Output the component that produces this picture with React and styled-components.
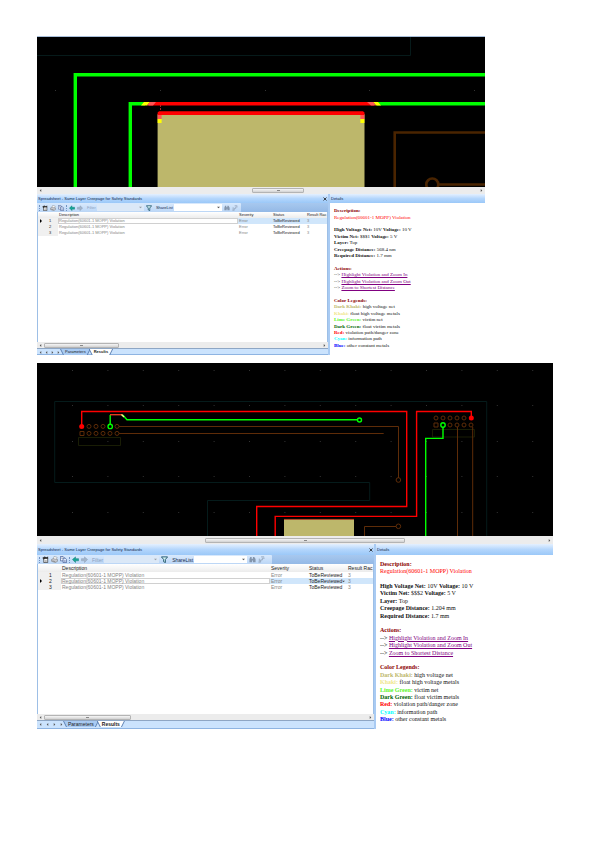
import React from "react";
import styled, { createGlobalStyle, ThemeProvider, css } from "styled-components";

const GlobalStyle = createGlobalStyle`
  * {
    box-sizing: border-box;
  }
  body {
    margin: 0;
    background: #fff;
    font-family: "Liberation Sans", Arial, sans-serif;
  }
`;

const compact = {
  uiText: "4px",
  titleText: "4px",
  docText: "5px",
  scroll: "7px",
  title: "9px",
  header: "6px",
  icon: "6px",
  iconGap: "2px",
  inset: "68px",
  panes: "161px",
  details: "155px",
  rowHead: "20px",
  severity: "34px",
  status: "34px",
  result: "21px",
  filter: "47px",
  share: "48px",
  toolbar: "204px",
  tabs: "7px",
  tabGap: "3px",
};

const regular = {
  uiText: "5px",
  titleText: "4px",
  docText: "6px",
  scroll: "8px",
  title: "11px",
  header: "8px",
  icon: "7px",
  iconGap: "2px",
  inset: "0px",
  panes: "185px",
  details: "177px",
  rowHead: "23px",
  severity: "38px",
  status: "39px",
  result: "26px",
  filter: "55px",
  share: "53px",
  toolbar: "235px",
  tabs: "9px",
  tabGap: "4px",
};

const Page = styled.main`
  display: flex;
  flex-direction: column;
  gap: 8px;
  padding: 36px 47px 40px 37px;
`;

const Window = styled.section`
  width: calc(100% - ${({ theme }) => theme.inset});
  font-size: ${({ theme }) => theme.uiText};
  line-height: 6px;
  color: #222;
`;

const Board = styled.svg`
  display: block;
  width: 100%;
  height: auto;
  background: #000;
`;

const BoardFrame = styled.div`
  border-top: ${({ $line }) => ($line ? "1px solid #a9bfda" : "0")};
`;

const ScrollBar = styled.div`
  display: flex;
  align-items: center;
  gap: 2px;
  height: ${({ $thin, theme }) => ($thin ? "6px" : theme.scroll)};
  padding: 0 2px;
  background: #ececec;
`;

const Track = styled.div`
  flex: 1;
  height: 5px;
`;

const Thumb = styled.div`
  display: flex;
  align-items: center;
  justify-content: center;
  width: ${({ $size }) => $size}%;
  height: 5px;
  margin-left: ${({ $start }) => $start}%;
  border: 1px solid #b4b4b4;
  border-radius: 1px;
  background: linear-gradient(#f6f6f6, #d2d2d2);
  &::after {
    content: "";
    width: 3px;
    height: 1px;
    background: #888;
  }
`;

const Arrow = styled.svg`
  display: block;
  flex: none;
  width: ${({ $large }) => ($large ? "4px" : "3px")};
  height: ${({ $large }) => ($large ? "4px" : "3px")};
  fill: #555;
`;

const Panes = styled.div`
  display: grid;
  grid-template-columns: minmax(0, 1fr) ${({ theme }) => theme.details};
  gap: 2px;
  min-height: ${({ theme }) => theme.panes};
  background: #a9cbf3;
`;

const Pane = styled.div`
  display: flex;
  flex-direction: column;
  min-width: 0;
`;

const TitleBar = styled.header`
  display: flex;
  align-items: center;
  justify-content: space-between;
  height: ${({ theme }) => theme.title};
  padding: 0 1px;
  font-size: ${({ theme }) => theme.titleText};
  color: #10284c;
  background: linear-gradient(#e4f0ff, #b4d6fc 50%, #9bc8f8);
  white-space: nowrap;
`;

const Heading = styled.h2`
  margin: 0;
  font-size: inherit;
  font-weight: 400;
`;

const IconButton = styled.button`
  display: flex;
  flex: none;
  width: ${({ theme, $size }) => $size || theme.icon};
  padding: 0;
  border: 0;
  background: none;
  & svg {
    display: block;
    width: 100%;
  }
`;

const ToolStrip = styled.div`
  height: 9px;
  background: linear-gradient(#a7c8ef, #94b9e6);
`;

const ToolBar = styled.div`
  display: flex;
  align-items: center;
  gap: ${({ theme }) => theme.iconGap};
  width: ${({ theme }) => theme.toolbar};
  height: 9px;
  padding-left: 2px;
  border-radius: 0 1px 1px 0;
  background: linear-gradient(#d9e9fc, #bbd6f6);
  white-space: nowrap;
`;

const Grip = styled.span`
  height: 6px;
  border-left: 1px dotted #6f93c3;
`;

const Field = styled.label`
  display: flex;
  align-items: center;
  gap: 1px;
  margin-left: 2px;
  color: ${({ $muted }) => ($muted ? "#8aa0bf" : "#15294b")};
`;

const SelectBox = styled.span`
  display: flex;
  align-items: center;
  width: ${({ $width }) => $width};
  height: 7px;
  padding-right: 2px;
  background: ${({ $muted }) => ($muted ? "#dbe8f7" : "#fff")};
  & select {
    flex: 1;
    min-width: 0;
    height: 6px;
    padding: 0;
    border: 0;
    background: transparent;
    appearance: none;
    font-size: 4px;
  }
`;

const TableArea = styled.div`
  flex: 1;
  border-left: 1px solid #9dbfe6;
  border-right: 1px solid #9dbfe6;
  background: #fff;
`;

const Table = styled.table`
  width: 100%;
  table-layout: fixed;
  border-collapse: separate;
  border-spacing: 0;
  white-space: nowrap;
  & th,
  & td {
    height: 6px;
    padding: 0 0 0 1px;
    overflow: hidden;
    text-align: left;
    font-weight: 400;
    line-height: 6px;
  }
  & thead th {
    height: ${({ theme }) => theme.header};
    line-height: ${({ theme }) => theme.header};
    background: linear-gradient(#fff, #ececec);
  }
`;

const Column = styled.col`
  width: ${({ theme, $name }) => theme[$name]};
`;

const RowHead = styled.th`
  background: #f0f0f0;
  & div {
    display: flex;
    align-items: center;
    gap: 6px;
  }
`;

const Cell = styled.td`
  color: ${({ $strong }) => ($strong ? "#222" : "#858585")};
  ${({ $active }) =>
    $active &&
    css`
      background: #d0e6fb;
    `}
`;

const DescriptionCell = styled(Cell)`
  background: #fff;
  box-shadow: inset 0 0 0 1px ${({ $active }) => ($active ? "#d0d0d0" : "#fff")};
`;

const StatusText = styled.div`
  display: flex;
  align-items: center;
`;

const TabStrip = styled.nav`
  display: flex;
  align-items: flex-start;
  height: ${({ theme }) => theme.tabs};
  padding-left: 2px;
  border-top: 1px solid #8ea6c4;
  border-bottom: 1px solid #8eb4e2;
  background: #cbe3fd;
`;

const TabArrows = styled.div`
  display: flex;
  align-items: center;
  gap: ${({ theme }) => theme.tabGap};
  height: 6px;
`;

const Tab = styled.button`
  position: relative;
  isolation: isolate;
  height: 6px;
  margin-right: -2px;
  padding: 0 5px;
  border: 0;
  background: #5f83b4;
  clip-path: polygon(0 0, 100% 0, calc(100% - 3px) 100%, 3px 100%);
  color: #222;
  font-family: inherit;
  font-size: ${({ theme }) => theme.uiText};
  font-weight: ${({ $active }) => ($active ? 700 : 400)};
  line-height: 6px;
  &::before {
    content: "";
    position: absolute;
    inset: 0 1px;
    z-index: -1;
    background: ${({ $active }) => ($active ? "#fff" : "#a9cbf3")};
    clip-path: polygon(0 0, 100% 0, calc(100% - 3px) 100%, 3px 100%);
  }
`;

const Report = styled.div`
  flex: 1;
  display: grid;
  grid-auto-rows: 1fr;
  padding: 5px 0 6px 4px;
  background: #fff;
  color: #111;
  font-family: "Liberation Serif", "Times New Roman", serif;
  font-size: ${({ theme }) => theme.docText};
  line-height: 6px;
  white-space: nowrap;
`;

const Line = styled.div`
  display: flex;
  align-items: center;
  min-height: 0;
  color: ${({ $color }) => $color || "inherit"};
  & p {
    margin: 0;
  }
  & a {
    color: #800080;
  }
`;

const Label = styled.b`
  color: ${({ $color }) => $color || "inherit"};
`;

const LeftArrow = () => (
  <Arrow viewBox="0 0 4 4"><path d="M3 0v4L1 2z" /></Arrow>
);

const RightArrow = () => (
  <Arrow viewBox="0 0 4 4"><path d="M1 0v4l2-2z" /></Arrow>
);

const DownArrow = ({ muted }) => (
  <Arrow viewBox="0 0 4 4"><path d="M0 1h4L2 3z" opacity={muted ? 0.5 : 1} /></Arrow>
);

const icons = {
  Properties: (
    <>
      <path d="M4 5h9v10H4z" fill="#fff" stroke="#222" strokeWidth="1.5" />
      <path d="M1 4l5-3 4 2 4-2v5H7L3 8z" fill="#333" />
      <path d="M6 10h5M6 12.500h5" stroke="#555" />
    </>
  ),
  Print: (
    <>
      <path d="M5 7l2-6 7 2-2 5" fill="#fff" stroke="#777" />
      <path d="M1 8l4-2 10 2v4l-5 3-9-3z" fill="#c7c9cf" stroke="#666" />
      <path d="M3 11l7 2" stroke="#555" />
    </>
  ),
  Copy: (
    <>
      <path d="M1 1h6l2 2v8H1z" fill="#fff" stroke="#34508c" strokeWidth="1.5" />
      <path d="M7 5h5l3 3v7H7z" fill="#e8f0ff" stroke="#34508c" strokeWidth="1.5" />
      <path d="M3 4h3M3 6h3M9 10h4M9 12.500h4" stroke="#34508c" />
    </>
  ),
  Back: <path d="M1 8l7-6v4h7v5H8v4z" fill="#16a596" stroke="#08766d" />,
  Forward: <path d="M15 8L8 2v4H1v5h7v4z" fill="#a3b5cb" stroke="#8799b0" />,
  Funnel: <path d="M1 2h14l-5 6v7l-4-2V8z" fill="#d5f3f2" stroke="#174e65" strokeWidth="2" />,
  Find: <path d="M1 14V7l2-5h3v4h3V2h3l3 5v7H9v-4H7v4z" fill="#8395ac" />,
  Mark: <path d="M1 14h5V9h4V5h5M7 2h7M3 6v7" fill="none" stroke="#91a3ba" strokeWidth="2" />,
};

const Icon = ({ name }) => (
  <IconButton type="button" aria-label={name}>
    <svg viewBox="0 0 16 16">{icons[name]}</svg>
  </IconButton>
);

const rows = [1, 2, 3];

const legends = [
  ["Dark Khaki", "#bdb76b", "high voltage net"],
  ["Khaki", "#f0e68c", "float high voltage metals"],
  ["Lime Green", "#5cf52b", "victim net"],
  ["Dark Green", "#006400", "float victim metals"],
  ["Red", "#f00", "violation path/danger zone"],
  ["Cyan", "#0ff", "information path"],
  ["Blue", "#00f", "other constant metals"],
];

const Scroller = ({ start, size, thin }) => (
  <ScrollBar $thin={thin}>
    <LeftArrow />
    <Track><Thumb $start={start} $size={size} /></Track>
    <RightArrow />
  </ScrollBar>
);

const Select = ({ label, width, muted }) => (
  <Field $muted={muted}>
    {label}
    <SelectBox $width={width} $muted={muted}>
      <select disabled={muted}><option /></select>
      <DownArrow muted={muted} />
    </SelectBox>
  </Field>
);

const Spreadsheet = ({ theme, active, thumb }) => (
  <Pane>
    <TitleBar>
      <Heading>Spreadsheet - Same Layer Creepage for Safety Standards</Heading>
      <IconButton type="button" aria-label="Close" $size="4px">
        <svg viewBox="0 0 8 8"><path d="M1 1l6 6M7 1L1 7" stroke="#111" strokeWidth="1.5" /></svg>
      </IconButton>
    </TitleBar>
    <ToolStrip>
      <ToolBar>
        <Grip />
        <Icon name="Properties" />
        <Icon name="Print" />
        <Icon name="Copy" />
        <Grip />
        <Icon name="Back" />
        <Icon name="Forward" />
        <Select label="Filter" width={theme.filter} muted />
        <Icon name="Funnel" />
        <Select label="ShareList" width={theme.share} />
        <Icon name="Find" />
        <Icon name="Mark" />
      </ToolBar>
    </ToolStrip>
    <TableArea>
      <Table>
        <colgroup>
          <Column $name="rowHead" />
          <col />
          <Column $name="severity" />
          <Column $name="status" />
          <Column $name="result" />
        </colgroup>
        <thead>
          <tr>
            <th />
            <th>Description</th>
            <th>Severity</th>
            <th>Status</th>
            <th>Result Rac</th>
          </tr>
        </thead>
        <tbody>
          {rows.map((n) => (
            <tr key={n}>
              <RowHead>
                <div>
                  <Arrow viewBox="0 0 4 4" $large>{n === active && <path d="M1 0v4l2-2z" fill="#000" />}</Arrow>
                  {n}
                </div>
              </RowHead>
              <DescriptionCell $active={n === active}>Regulation(60601-1 MOPP) Violation</DescriptionCell>
              <Cell $active={n === active}>Error</Cell>
              <Cell $active={n === active} $strong>
                <StatusText>
                  <span>ToBeReviewed</span>
                  {n === active && n > 1 && <DownArrow />}
                </StatusText>
              </Cell>
              <Cell $active={n === active}>3</Cell>
            </tr>
          ))}
        </tbody>
      </Table>
    </TableArea>
    <Scroller start={0} size={thumb} thin />
    <TabStrip>
      <TabArrows>
        <LeftArrow />
        <LeftArrow />
        <RightArrow />
        <RightArrow />
      </TabArrows>
      <Tab type="button">Parameters</Tab>
      <Tab type="button" $active>Results</Tab>
    </TabStrip>
  </Pane>
);

const Details = ({ victim, distance }) => (
  <Pane>
    <TitleBar><Heading>Details</Heading></TitleBar>
    <Report>
      <Line $color="#8b0000"><b>Description:</b></Line>
      <Line $color="#f00">Regulation(60601-1 MOPP) Violation</Line>
      <Line />
      <Line><p><b>High Voltage Net:</b> 10V <b>Voltage:</b> 10 V</p></Line>
      <Line><p><b>Victim Net:</b> {victim} <b>Voltage:</b> 5 V</p></Line>
      <Line><p><b>Layer:</b> Top</p></Line>
      <Line><p><b>Creepage Distance:</b> {distance}</p></Line>
      <Line><p><b>Required Distance:</b> 1.7 mm</p></Line>
      <Line />
      <Line $color="#8b0000"><b>Actions:</b></Line>
      <Line><p>--&gt; <a href="#in">Highlight Violation and Zoom In</a></p></Line>
      <Line><p>--&gt; <a href="#out">Highlight Violation and Zoom Out</a></p></Line>
      <Line><p>--&gt; <a href="#shortest">Zoom to Shortest Distance</a></p></Line>
      <Line />
      <Line $color="#8b0000"><b>Color Legends:</b></Line>
      {legends.map(([name, color, text]) => (
        <Line key={name}><p><Label $color={color}>{name}:</Label> {text}</p></Line>
      ))}
    </Report>
  </Pane>
);

const CloseUpBoard = () => (
  <Board viewBox="0 0 448 150">
    <path d="M0 18.500H373.500V0" fill="none" stroke="#061a1a" />
    {[18, 123, 228, 332, 437].map((x) => (
      <rect key={x} x={x} y="53" width="1" height="1" fill="#333" />
    ))}
    <g fill="none" strokeWidth="3.4">
      <path d="M38.300 150V37.800H448" stroke="#0f0" />
      <path d="M93.300 150V66.700H108M340 66.700H448" stroke="#0f0" />
      <path d="M112 66.700H337" stroke="#f00" />
    </g>
    <path d="M107 65h6l-3 3.400h-6zM336 65h5l3 3.400h-5z" fill="#ff0" />
    <path d="M113 65h6l-3 3.400h-6zM330 65h6l3 3.400h-5z" fill="#f55" />
    <path d="M123.500 68v6" stroke="#a22" strokeDasharray="2 1" />
    <path d="M120.600 77H327.500V150H120.600z" fill="#bdb76b" />
    <path d="M120.600 78v-2.500l1.500-1.200H326l1.500 1.200V78z" fill="#f00" />
    <path d="M120.600 78h4v4h-4zM323.400 78h4v4h-4z" fill="#f55" />
    <path d="M120.600 82h4v4h-4zM323.400 82h4v4h-4z" fill="#ff0" />
    <g fill="none" stroke="#4a2400" strokeWidth="2.6">
      <path d="M357.700 150V95.500H448M402 147.500H448" />
      <circle cx="395.300" cy="147.500" r="6" />
    </g>
  </Board>
);

const gridColumns = Array.from({ length: 14 }, (_, i) => 35 + i * 35.4);
const gridRows = [7, 42, 78, 113, 149];
const leftPads = [52, 59, 66, 80];
const lowerPads = [52, 59, 66, 73, 80];
const rightPads = [399, 406, 413, 420, 427];

const OverviewBoard = () => (
  <Board viewBox="0 0 516 173">
    {gridRows.map((y) =>
      gridColumns.map((x) => <rect key={`${x}-${y}`} x={x} y={y} width="1" height="1" fill="#333" />)
    )}
    <g fill="none" stroke="#062222" strokeWidth="0.8">
      <path d="M449.700 173V38.500H17.700V119.500H332.700V137.500H170.500V173" />
      <path d="M41.500 74.500H83.500V82.500H41.500zM395.500 66.500H437.500V74H395.500z" stroke="#1f2506" />
    </g>
    <g fill="none" stroke="#5e2c08" strokeWidth="1">
      <path d="M82 63.500H361.500V115M82 70.500H346.700M327.500 173V163.500H359M420.500 64V173M435.700 64V173" />
      <path d="M43 68.500h4v4h-4zM397 60h4v4h-4z" />
      {leftPads.map((x) => <circle key={x} cx={x} cy="63.400" r="2" />)}
      {lowerPads.map((x) => <circle key={x} cx={x} cy="70.400" r="2" />)}
      {rightPads.map((x) => <circle key={x} cx={x} cy="55" r="2" />)}
      {[413, 420, 427, 434].map((x) => <circle key={x} cx={x} cy="62" r="2" />)}
      <circle cx="361.400" cy="117" r="2.300" />
      <circle cx="361.400" cy="163.300" r="2.300" />
    </g>
    <g fill="none" stroke="#f00" strokeWidth="1.400">
      <path d="M44.700 63V48.500H369.700V143.500H219.700V173" />
      <path d="M434.300 55V48.500H379.600V153.400H238.200V173" />
    </g>
    <circle cx="44.700" cy="63.400" r="2.500" fill="#f00" />
    <circle cx="434.300" cy="55" r="2.500" fill="#f00" />
    <path d="M247 156.500H317V173H247z" fill="#bdb76b" />
    <path d="M247 156.400H317" stroke="#d44a28" strokeWidth="0.700" />
    <g fill="none" stroke="#0f0" strokeWidth="1.400">
      <path d="M73.200 61V52M85.700 52L90 56.700H320M406 64V75.400H388.700V173" />
      <circle cx="73.200" cy="63.400" r="2.200" />
      <circle cx="322.500" cy="57" r="2" />
      <circle cx="406" cy="62" r="2.200" />
    </g>
    <path d="M73 51.700H85.500" stroke="#e33b20" strokeWidth="1.400" />
    <path d="M84.500 51.500L87 54" stroke="#ef8" strokeWidth="1.400" />
  </Board>
);

const App = () => (
  <>
    <GlobalStyle />
    <Page>
      <ThemeProvider theme={compact}>
        <Window>
          <BoardFrame $line><CloseUpBoard /></BoardFrame>
          <Scroller start={48} size={12} />
          <Panes>
            <Spreadsheet theme={compact} active={1} thumb={27} />
            <Details victim="$$$1" distance="568.4 nm" />
          </Panes>
        </Window>
      </ThemeProvider>
      <ThemeProvider theme={regular}>
        <Window>
          <BoardFrame><OverviewBoard /></BoardFrame>
          <Scroller start={32} size={40} />
          <Panes>
            <Spreadsheet theme={regular} active={2} thumb={27} />
            <Details victim="$$$2" distance="1.204 mm" />
          </Panes>
        </Window>
      </ThemeProvider>
    </Page>
  </>
);

export default App;
